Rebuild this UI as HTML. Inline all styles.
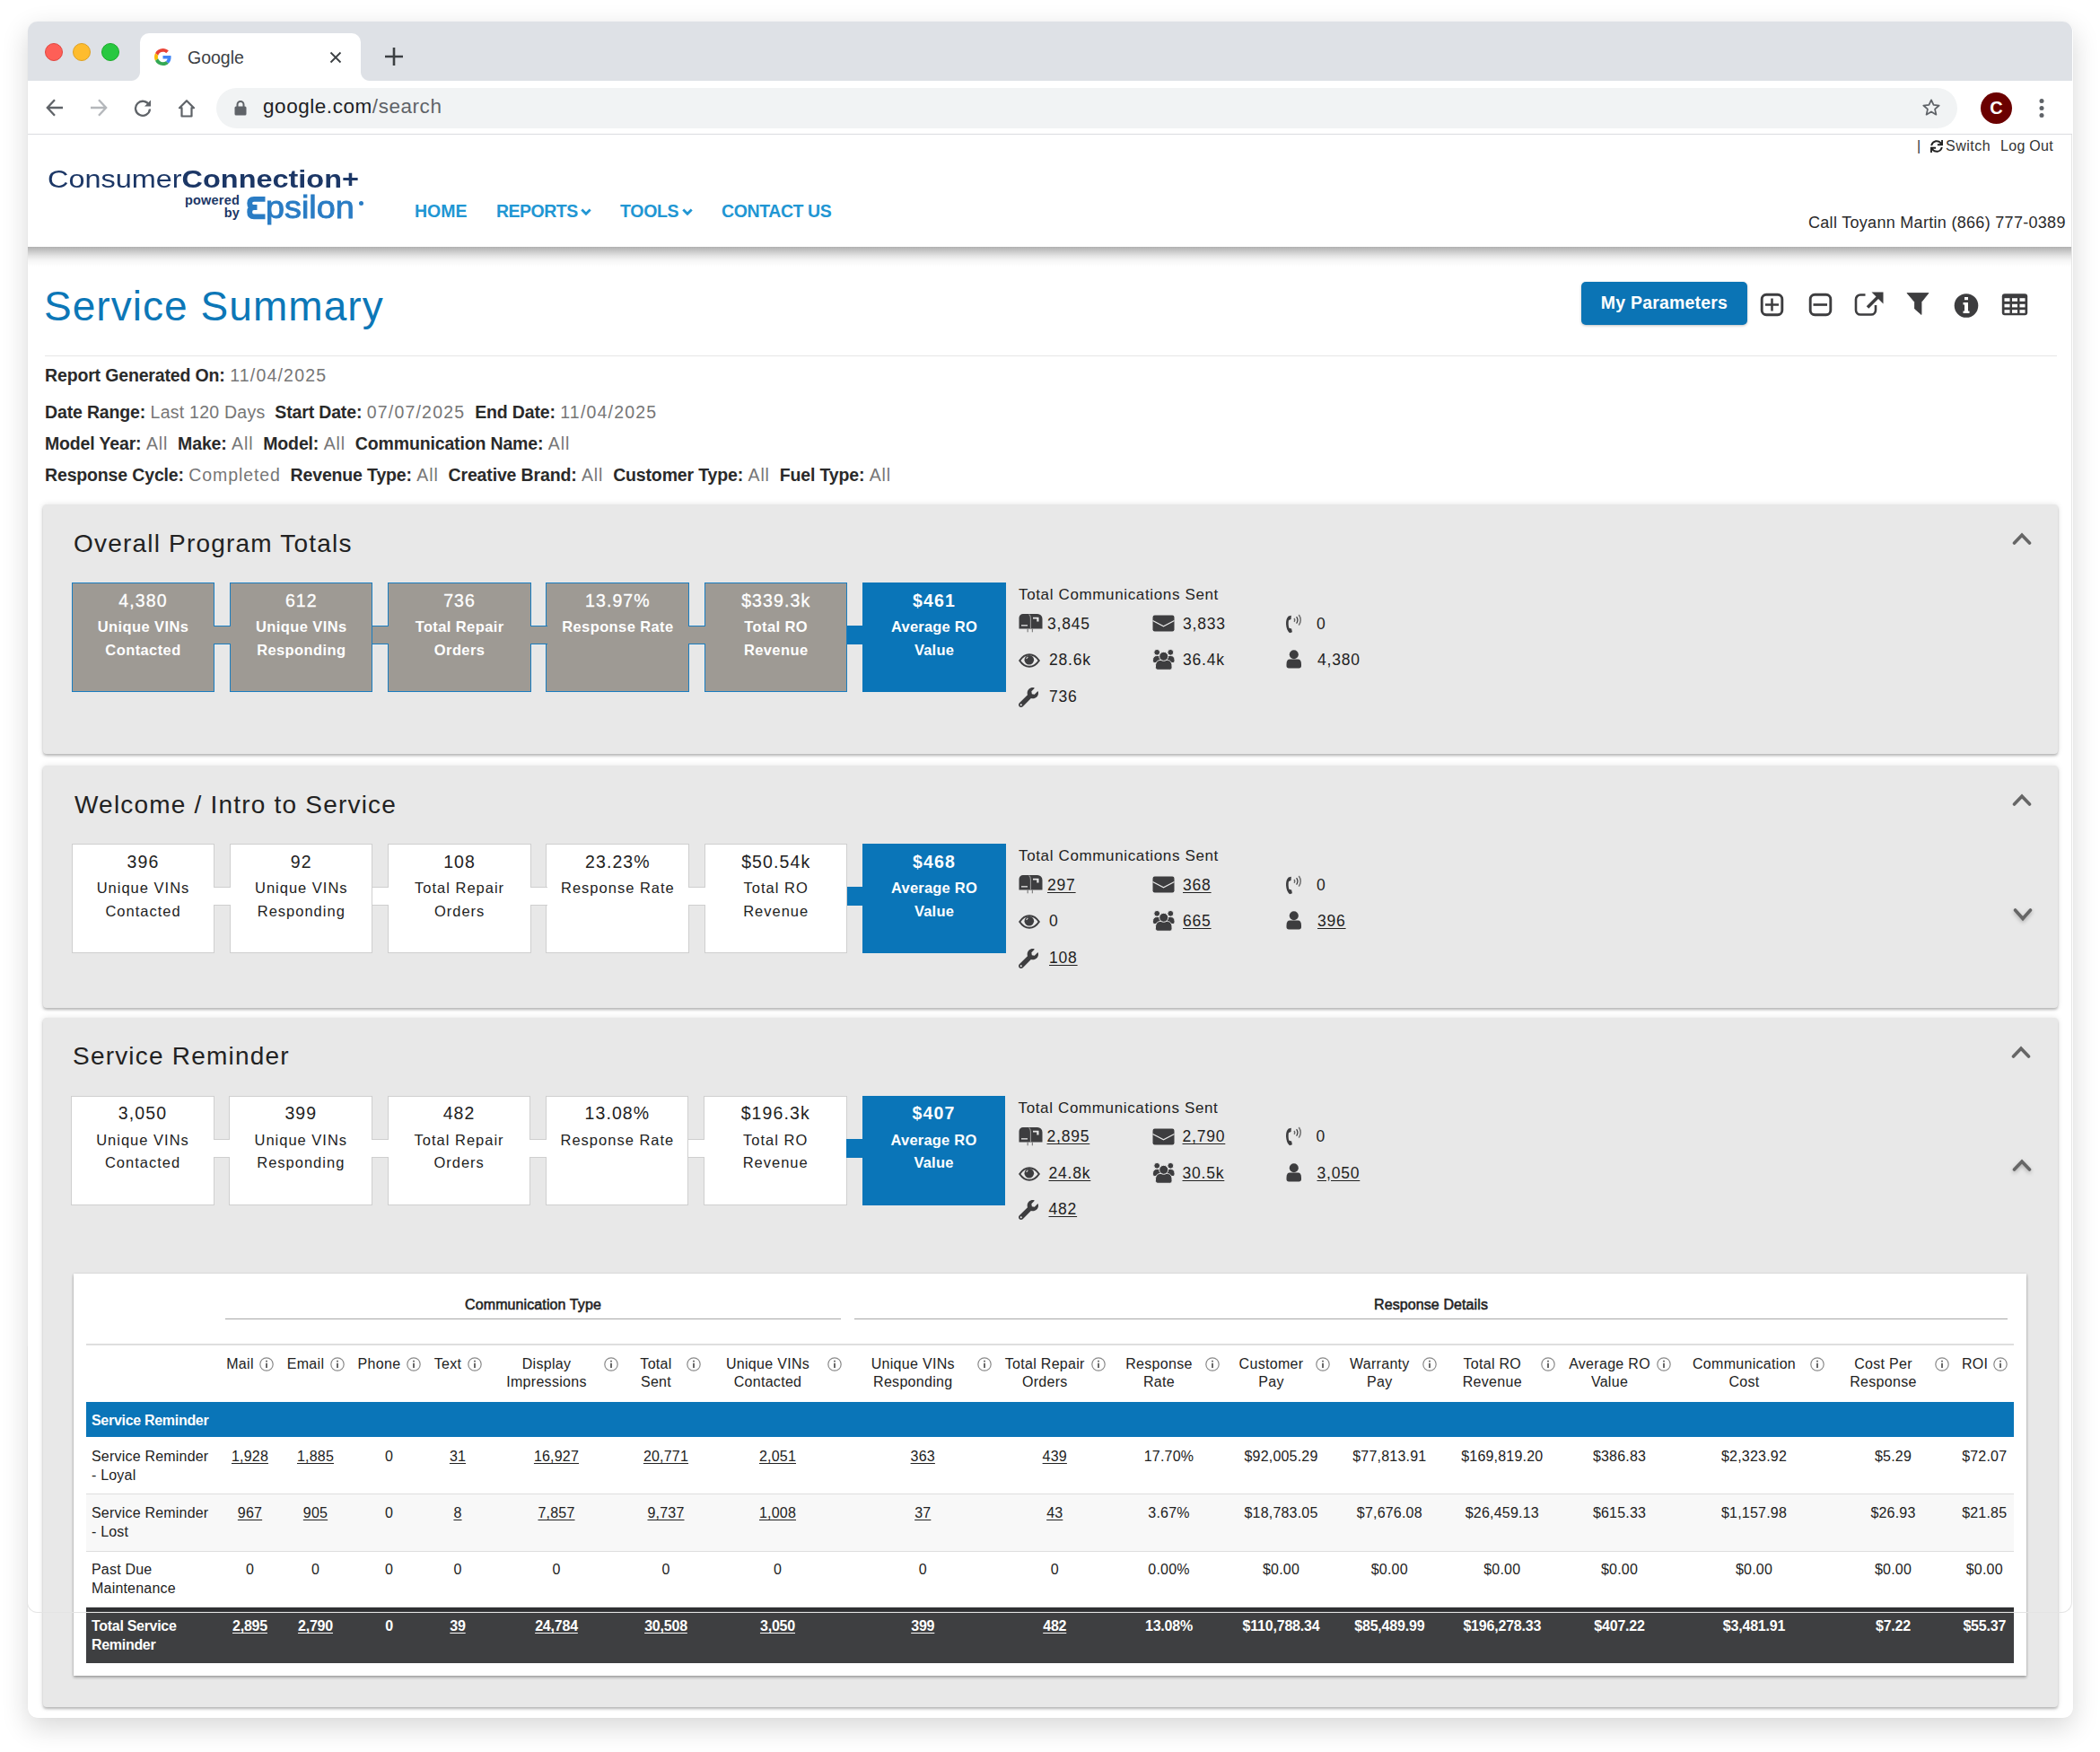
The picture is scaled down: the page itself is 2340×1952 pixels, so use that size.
<!DOCTYPE html>
<html><head><meta charset="utf-8">
<style>
*{box-sizing:border-box;margin:0;padding:0}
html,body{width:2340px;height:1952px;overflow:hidden;background:#fff;font-family:"Liberation Sans",sans-serif;color:#222}
.a{position:absolute}
#win{position:absolute;left:30.5px;top:24px;width:2279px;height:1890px;border-radius:11px;background:#fff;box-shadow:0 10px 30px rgba(0,0,0,.16),0 0 1px rgba(0,0,0,.08)}
#tabbar{position:absolute;left:30.5px;top:24px;width:2278px;height:66px;background:#dee1e6;border-radius:11px 11px 0 0}
.tl{position:absolute;width:20px;height:20px;border-radius:50%;top:48px}
#tab{position:absolute;left:156px;top:37px;width:246px;height:53px;background:#fff;border-radius:10px 10px 0 0}
#tab:before,#tab:after{content:"";position:absolute;bottom:0;width:10px;height:10px}
#tab:before{left:-10px;background:radial-gradient(circle at 0 0,transparent 9.5px,#fff 10.5px)}
#tab:after{right:-10px;background:radial-gradient(circle at 100% 0,transparent 9.5px,#fff 10.5px)}
#toolbar{position:absolute;left:30.5px;top:90px;width:2278px;height:60px;background:#fff;border-bottom:1px solid #dadce0}
#omni{position:absolute;left:241px;top:98px;width:1940px;height:45px;border-radius:22.5px;background:#f1f3f4}
#hdr{position:absolute;left:30.5px;top:150px;width:2278px;height:125px;background:#fff;z-index:2}
#hdrsh{position:absolute;left:30.5px;top:275px;width:2278px;height:22px;z-index:2;background:linear-gradient(to bottom,rgba(0,0,0,.31) 0,rgba(0,0,0,.21) 5px,rgba(0,0,0,.11) 10px,rgba(0,0,0,.04) 15px,rgba(0,0,0,0) 22px)}
.nav{position:absolute;top:224px;font-size:19.5px;font-weight:bold;color:#2196d3;white-space:nowrap}
.lbl{font-weight:bold;color:#2a2a2a;letter-spacing:-0.15px}
.val{color:#767676;letter-spacing:0.9px}
.dt{letter-spacing:1.2px}
.meta{position:absolute;left:50px;font-size:19.5px;white-space:nowrap}
.panel{position:absolute;left:48px;width:2245px;background:#e8e8e8;border-radius:4px;box-shadow:0 2px 3px rgba(0,0,0,.26),0 0 7px rgba(0,0,0,.1)}
.ptitle{position:absolute;font-size:28px;color:#222;white-space:nowrap;line-height:1;letter-spacing:1.2px;margin-top:1.5px}
.box{position:absolute;width:159.5px;height:122px;border:1.2px solid #ccc}
.box.grey{background:#9e9a94;border-color:#1a7dc0}
.box.white{background:#fff;border-color:#cfcfcf}
.box.blue{background:#0a75b8;border-color:#0a75b8}
.conn{position:absolute;height:21px;border-top:1.2px solid #ccc;border-bottom:1.2px solid #ccc;z-index:1}
.conn.grey{background:#9e9a94;border-color:#1a7dc0}
.conn.white{background:#fff;border-color:#cfcfcf}
.conn.blue{background:#0a75b8;border-color:#0a75b8}
.btxt{position:absolute;width:160px;height:122px;text-align:center;z-index:2;color:#222}
.btxt .bn{position:absolute;left:0;width:100%;top:8.5px;font-size:19.5px;line-height:22px;letter-spacing:1.1px}
.btxt.grey .bn{-webkit-text-stroke:0.3px #fff}
.btxt .bl{position:absolute;left:0;width:100%;top:37px;font-size:16.5px;line-height:25.8px;letter-spacing:1px}
.btxt.grey{color:#fff}.btxt.grey .bl{font-weight:bold;letter-spacing:0.4px}
.btxt.blue{color:#fff;font-weight:bold}.btxt.blue .bl{letter-spacing:0.2px}
.ctitle{position:absolute;font-size:17px;line-height:20px;white-space:nowrap;color:#222;letter-spacing:0.64px}
.cval{position:absolute;font-size:17.5px;line-height:20px;white-space:nowrap;color:#222;letter-spacing:0.8px}
.u{text-decoration:underline;text-underline-offset:2px}
.th2{font-size:16px;text-align:center;line-height:20px;color:#222;letter-spacing:0.1px;-webkit-text-stroke:0.55px #222}
.th{font-size:16px;line-height:20.5px;text-align:center;color:#222;white-space:nowrap;letter-spacing:0.3px}
.td{font-size:16px;line-height:21px;color:#222;white-space:nowrap;letter-spacing:0.2px}
.td.c{text-align:center}
</style></head>
<body>
<div id="win"></div>
<div id="tabbar"></div>
<div class="tl" style="left:50px;background:#fe5f57;border:1px solid #e14640"></div>
<div class="tl" style="left:81px;background:#febc2e;border:1px solid #dea123"></div>
<div class="tl" style="left:113px;background:#28c840;border:1px solid #1aab29"></div>
<div id="tab"></div>
<div id="toolbar"></div>
<div id="omni"></div>
<div id="hdr"></div><div id="hdrsh"></div>
<svg class="a" style="left:172px;top:54px" width="19" height="19" viewBox="0 0 48 48"><path fill="#EA4335" d="M24 9.5c3.54 0 6.71 1.22 9.21 3.6l6.85-6.85C35.9 2.38 30.47 0 24 0 14.62 0 6.51 5.38 2.56 13.22l7.98 6.19C12.43 13.72 17.74 9.5 24 9.5z"/><path fill="#4285F4" d="M46.98 24.55c0-1.57-.15-3.09-.38-4.55H24v9.02h12.94c-.58 2.96-2.26 5.48-4.78 7.18l7.73 6c4.51-4.18 7.09-10.36 7.09-17.65z"/><path fill="#FBBC05" d="M10.53 28.59c-.48-1.45-.76-2.99-.76-4.59s.27-3.14.76-4.59l-7.98-6.19C.92 16.46 0 20.12 0 24c0 3.88.92 7.54 2.56 10.78l7.97-6.19z"/><path fill="#34A853" d="M24 48c6.48 0 11.93-2.13 15.89-5.81l-7.73-6c-2.15 1.45-4.92 2.3-8.16 2.3-6.26 0-11.57-4.22-13.47-9.91l-7.98 6.19C6.51 42.62 14.62 48 24 48z"/></svg>
<div class="a" style="left:209px;top:52px;font-size:19.5px;color:#3c4043;line-height:24px">Google</div>
<svg class="a" style="left:367px;top:57px" width="14" height="14" viewBox="0 0 14 14"><path d="M1.5 1.5L12.5 12.5M12.5 1.5L1.5 12.5" stroke="#3c4043" stroke-width="1.8"/></svg>
<svg class="a" style="left:428px;top:52px" width="22" height="22" viewBox="0 0 22 22"><path d="M11 1V21M1 11H21" stroke="#3c4043" stroke-width="2.6"/></svg>
<svg class="a" style="left:50px;top:109px" width="22" height="22" viewBox="0 0 22 22"><path d="M20 11H3.5M11 2.2L2.8 11L11 19.8" stroke="#5f6368" stroke-width="2.3" fill="none"/></svg>
<svg class="a" style="left:99px;top:109px" width="22" height="22" viewBox="0 0 22 22"><path d="M2 11H18.5M11 2.2L19.2 11L11 19.8" stroke="#b4b7bb" stroke-width="2.3" fill="none"/></svg>
<svg class="a" style="left:148px;top:109px" width="22" height="22" viewBox="0 0 22 22"><path d="M18.2 8.2A8 8 0 1 0 19 12.5" stroke="#5f6368" stroke-width="2.3" fill="none"/><path d="M20 2.5V9.5H13Z" fill="#5f6368"/></svg>
<svg class="a" style="left:197px;top:110px" width="22" height="21" viewBox="0 0 22 21"><path d="M11 2.2L3 10.2H5.5V19.5H16.5V10.2H19Z" stroke="#5f6368" stroke-width="2.2" fill="none" stroke-linejoin="round"/></svg>
<svg class="a" style="left:261px;top:111px" width="14" height="18" viewBox="0 0 14 18"><path d="M3.5 8V5.5A3.5 3.5 0 0 1 10.5 5.5V8" stroke="#5f6368" stroke-width="2" fill="none"/><rect x="0.5" y="7.5" width="13" height="10" rx="1.5" fill="#5f6368"/></svg>
<div class="a" style="left:293px;top:106px;font-size:22.5px;line-height:26px;white-space:nowrap;color:#202124;letter-spacing:0.55px">google.com<span style="color:#5f6368">/search</span></div>
<svg class="a" style="left:2141px;top:109px" width="22" height="22" viewBox="0 0 24 24"><path d="M12 2.5l2.8 6.2 6.7.6-5.1 4.5 1.5 6.6L12 16.9l-5.9 3.5 1.5-6.6-5.1-4.5 6.7-.6z" stroke="#5f6368" stroke-width="1.9" fill="none" stroke-linejoin="round"/></svg>
<div class="a" style="left:2207px;top:103px;width:35px;height:35px;border-radius:50%;background:#6b0000;color:#fff;font-weight:bold;font-size:20px;line-height:35px;text-align:center">C</div>
<svg class="a" style="left:2270px;top:108px" width="10" height="26" viewBox="0 0 10 26"><circle cx="5" cy="4.4" r="2.5" fill="#5f6368"/><circle cx="5" cy="12.5" r="2.5" fill="#5f6368"/><circle cx="5" cy="20.6" r="2.5" fill="#5f6368"/></svg>
<div class="a" style="left:53px;top:183px;font-size:28.5px;line-height:32px;color:#1c3766;white-space:nowrap;z-index:3;transform:scaleX(1.138);transform-origin:0 0">Consumer<b>Connection+</b></div>
<div class="a" style="left:205px;top:216px;font-size:14.5px;line-height:14px;font-weight:bold;color:#1c3766;text-align:right;width:62px;z-index:3;letter-spacing:0.2px">powered<br>by</div>
<svg class="a" style="left:274px;top:216px;z-index:3" width="24" height="32" viewBox="0 0 24 32"><path d="M21.5 5.8H9Q4.2 5.8 4.2 10.4Q4.2 15 9 15H12.5M12.5 15H9Q4.2 15 4.2 20.2Q4.2 25.4 9 25.4H21.5" stroke="#2a7cc4" stroke-width="5.8" fill="none"/></svg><div class="a" style="left:296px;top:211px;font-size:35px;line-height:40px;color:#2a7cc4;white-space:nowrap;z-index:3;-webkit-text-stroke:0.9px #2a7cc4;transform:scaleX(1.08);transform-origin:0 0">psilon</div><div class="a" style="left:400px;top:224px;width:5px;height:5px;border-radius:50%;background:#2a7cc4;z-index:3"></div>
<div class="nav" style="left:462px;z-index:3">HOME</div>
<div class="nav" style="left:553px;z-index:3;letter-spacing:-0.5px">REPORTS</div>
<div class="nav" style="left:691px;z-index:3;letter-spacing:-0.3px">TOOLS</div>
<div class="nav" style="left:804px;z-index:3;letter-spacing:-0.4px">CONTACT US</div>
<svg class="a" style="left:647px;top:232px;z-index:3" width="12" height="9" viewBox="0 0 12 9"><path d="M1.3 1.5L6 6.2L10.7 1.5" stroke="#2196d3" stroke-width="2.8" fill="none"/></svg>
<svg class="a" style="left:760px;top:232px;z-index:3" width="12" height="9" viewBox="0 0 12 9"><path d="M1.3 1.5L6 6.2L10.7 1.5" stroke="#2196d3" stroke-width="2.8" fill="none"/></svg>
<div class="a" style="left:2136px;top:154px;font-size:16px;line-height:18px;color:#333;white-space:nowrap;z-index:3">|</div>
<svg class="a" style="left:2151px;top:156px;z-index:3" width="14" height="14" viewBox="0 0 512 512"><path fill="#222" d="M440.7 12.6l4 82.8A247.2 247.2 0 0 0 255.8 8C134.7 8 33.9 94.9 12.3 209.8A12 12 0 0 0 24.1 224h49.1a12 12 0 0 0 11.7-9.3 175.5 175.5 0 0 1 317-56.9l-101.5-4.9a12 12 0 0 0-12.6 12v47.4a12 12 0 0 0 12 12H500a12 12 0 0 0 12-12V12a12 12 0 0 0-12-12h-47.4a12 12 0 0 0-12 12.6zM255.8 432a175.6 175.6 0 0 1-146-77.8l101.8 4.9a12 12 0 0 0 12.6-12v-47.4a12 12 0 0 0-12-12H12a12 12 0 0 0-12 12V500a12 12 0 0 0 12 12h47.4a12 12 0 0 0 12-12.6l-4.1-82.6A247.2 247.2 0 0 0 256.2 504c121.1 0 221.9-86.9 243.6-201.8a12 12 0 0 0-11.8-14.2h-49.1a12 12 0 0 0-11.7 9.3A175.9 175.9 0 0 1 255.8 432z"/></svg>
<div class="a" style="left:2168px;top:154px;font-size:16px;line-height:18px;color:#333;white-space:nowrap;z-index:3;letter-spacing:0.5px">Switch</div>
<div class="a" style="left:2229px;top:154px;font-size:16px;line-height:18px;color:#333;white-space:nowrap;z-index:3;letter-spacing:0.3px">Log Out</div>
<div class="a" style="left:2015px;top:238px;font-size:18px;line-height:20px;color:#2a2a2a;white-space:nowrap;z-index:3;letter-spacing:0.3px">Call Toyann Martin (866) 777-0389</div>
<div class="a" id="t_title" style="left:49px;top:314px;font-size:46px;line-height:54px;color:#0c77b7;white-space:nowrap;letter-spacing:1.05px">Service Summary</div>
<div class="a" style="left:50px;top:396px;width:2242px;height:1px;background:#e6e6e6"></div>
<div class="meta" id="m1" style="top:406px;line-height:24px"><span class="lbl">Report Generated On:</span> <span class="val dt">11/04/2025</span></div>
<div class="meta" id="m2" style="top:447px;line-height:24px"><span class="lbl">Date Range:</span> <span class="val" style="letter-spacing:0.25px">Last 120 Days</span>&nbsp; <span class="lbl">Start Date:</span> <span class="val dt">07/07/2025</span>&nbsp; <span class="lbl">End Date:</span> <span class="val dt">11/04/2025</span></div>
<div class="meta" id="m3" style="top:482px;line-height:24px"><span class="lbl">Model Year:</span> <span class="val">All</span>&nbsp; <span class="lbl">Make:</span> <span class="val">All</span>&nbsp; <span class="lbl">Model:</span> <span class="val">All</span>&nbsp; <span class="lbl">Communication Name:</span> <span class="val">All</span></div>
<div class="meta" id="m4" style="top:517px;line-height:24px"><span class="lbl">Response Cycle:</span> <span class="val">Completed</span>&nbsp; <span class="lbl">Revenue Type:</span> <span class="val">All</span>&nbsp; <span class="lbl">Creative Brand:</span> <span class="val">All</span>&nbsp; <span class="lbl">Customer Type:</span> <span class="val">All</span>&nbsp; <span class="lbl">Fuel Type:</span> <span class="val">All</span></div>
<div class="a" style="left:1762px;top:314px;width:185px;height:48px;border-radius:5px;background:#0b74b5;box-shadow:0 1px 3px rgba(0,0,0,.25)"></div>
<div class="a" id="btn_t" style="left:1762px;top:313px;width:185px;height:48px;line-height:48px;text-align:center;color:#fff;font-weight:bold;font-size:19.5px;letter-spacing:0.2px">My Parameters</div>
<svg class="a" style="left:1961px;top:326px" width="27" height="27" viewBox="0 0 27 27"><rect x="2.2" y="2.2" width="22.6" height="22.6" rx="5" stroke="#3d3d3f" stroke-width="2.9" fill="none"/><path d="M13.5 6.5V20.5M6 13.5H21" stroke="#3d3d3f" stroke-width="2.5"/></svg>
<svg class="a" style="left:2015px;top:326px" width="27" height="27" viewBox="0 0 27 27"><rect x="2.2" y="2.2" width="22.6" height="22.6" rx="5" stroke="#3d3d3f" stroke-width="2.9" fill="none"/><path d="M5.5 13.5H21" stroke="#3d3d3f" stroke-width="2.7"/></svg>
<svg class="a" style="left:2066px;top:323px" width="34" height="30" viewBox="0 0 34 30"><path d="M12.5 5.5H7A5 5 0 0 0 2 10.5V22.5A5 5 0 0 0 7 27.5H19A5 5 0 0 0 24 22.5V17" stroke="#3d3d3f" stroke-width="2.6" fill="none"/><path d="M15 19.5L28 6.5" stroke="#3d3d3f" stroke-width="3.6"/><path d="M19.5 2.5H32.5V15.5Z" fill="#3d3d3f"/></svg>
<svg class="a" style="left:2124px;top:326px" width="26" height="25" viewBox="0 0 26 25"><path d="M1 0.5H25L17 10.5V24.5L9.5 18V10.5Z" fill="#3d3d3f" stroke="#3d3d3f" stroke-width="0.8" stroke-linejoin="round"/></svg>
<svg class="a" style="left:2177px;top:327px" width="28" height="27" viewBox="0 0 28 27"><ellipse cx="14" cy="13.5" rx="13.3" ry="13.3" fill="#3d3d3f"/><rect x="12" y="4" width="4" height="3.2" fill="#fff"/><path d="M10.5 10H16V19.5H17.5V22H10.5V19.5H12V12.5H10.5Z" fill="#fff"/></svg>
<svg class="a" style="left:2230px;top:327px" width="30" height="25" viewBox="0 0 30 25"><rect x="0.8" y="0.2" width="28.4" height="24" rx="3" fill="#3d3d3f"/><g fill="#fff"><rect x="3.5" y="5.2" width="6" height="3.6"/><rect x="12" y="5.2" width="6" height="3.6"/><rect x="20.5" y="5.2" width="6" height="3.6"/><rect x="3.5" y="11.8" width="6" height="3.6"/><rect x="12" y="11.8" width="6" height="3.6"/><rect x="20.5" y="11.8" width="6" height="3.6"/><rect x="3.5" y="18.2" width="6" height="3.6"/><rect x="12" y="18.2" width="6" height="3.6"/><rect x="20.5" y="18.2" width="6" height="3.6"/></g></svg>
<div class="panel" style="top:562px;left:48px;height:278px"></div>
<div class="ptitle" style="left:82px;top:590px">Overall Program Totals</div>
<div class="box grey" style="left:79.5px;top:649px"></div>
<div class="box grey" style="left:255.8px;top:649px"></div>
<div class="box grey" style="left:432.1px;top:649px"></div>
<div class="box grey" style="left:608.4px;top:649px"></div>
<div class="box grey" style="left:784.7px;top:649px"></div>
<div class="box blue" style="left:961.0px;top:649px"></div>
<div class="conn grey" style="left:238.3px;top:697px;width:18.7px"></div>
<div class="conn grey" style="left:414.6px;top:697px;width:18.7px"></div>
<div class="conn grey" style="left:590.9px;top:697px;width:18.7px"></div>
<div class="conn grey" style="left:767.2px;top:697px;width:18.7px"></div>
<div class="conn blue" style="left:943.5px;top:697px;width:18.7px"></div>
<div class="btxt grey" style="left:79.5px;top:649px"><div class="bn">4,380</div><div class="bl">Unique VINs<br>Contacted</div></div>
<div class="btxt grey" style="left:255.8px;top:649px"><div class="bn">612</div><div class="bl">Unique VINs<br>Responding</div></div>
<div class="btxt grey" style="left:432.1px;top:649px"><div class="bn">736</div><div class="bl">Total Repair<br>Orders</div></div>
<div class="btxt grey" style="left:608.4px;top:649px"><div class="bn">13.97%</div><div class="bl">Response Rate<br></div></div>
<div class="btxt grey" style="left:784.7px;top:649px"><div class="bn">$339.3k</div><div class="bl">Total RO<br>Revenue</div></div>
<div class="btxt blue" style="left:961.0px;top:649px"><div class="bn">$461</div><div class="bl">Average RO<br>Value</div></div>
<div class="ctitle" style="left:1135px;top:653px">Total Communications Sent</div>
<svg class="a" style="left:1135px;top:683px" width="27" height="22" viewBox="0 0 27 22"><path d="M5 1H21A5.5 5.5 0 0 1 26.5 6.5V17.5H0.5V5.5A4.5 4.5 0 0 1 5 1Z" fill="#3d3d3f"/><path d="M11.6 1.5C13.2 2.5 13.4 4 13.4 6V17.5" stroke="#9a9a9a" stroke-width="1.1" fill="none"/><path d="M16 4.8H22.5V9.5H20.3V6.6H16Z" fill="#e8e8e8"/><rect x="3" y="13.2" width="7" height="1.3" fill="#e8e8e8"/><rect x="9.6" y="17.5" width="1.1" height="3.8" fill="#777"/><rect x="14.8" y="17.5" width="1.1" height="3.8" fill="#777"/></svg>
<div class="cval" style="left:1167px;top:684.5px">3,845</div>
<svg class="a" style="left:1284px;top:685px" width="25" height="19" viewBox="0 0 25 19"><rect x="0.5" y="0.5" width="24" height="18" rx="2.2" fill="#3d3d3f"/><path d="M0.5 6.5L12.5 12.8L24.5 6.5" stroke="#e8e8e8" stroke-width="1.3" fill="none"/></svg>
<div class="cval" style="left:1318px;top:684.5px">3,833</div>
<svg class="a" style="left:1432px;top:680.5px" width="20" height="26" viewBox="0 0 19 24"><path d="M6.5 4.2L3.6 4.8C1.5 6.5 0.8 10 1 13.5C1.2 17.5 2.6 21 4.8 22.6L7.5 21.8L6.8 18.2L4.2 17.5C3.4 15.5 3.2 11.5 3.8 9.2L6.2 8.2Z" fill="#3d3d3f"/><path d="M9.5 7.2Q11 9 9.5 10.8" stroke="#666" stroke-width="1.3" fill="none"/><path d="M12 5.5Q14.5 9 12 12.5" stroke="#3d3d3f" stroke-width="1.2" fill="none"/><path d="M14.5 3.5Q18.3 9 14.5 14.5" stroke="#777" stroke-width="1.5" fill="none"/></svg>
<div class="cval" style="left:1467px;top:684.5px">0</div>
<svg class="a" style="left:1135px;top:728px" width="24" height="16" viewBox="0 0 24 16"><path d="M1.2 8C4.5 3 8.3 1.2 12 1.2S19.5 3 22.8 8C19.5 13 15.7 14.8 12 14.8S4.5 13 1.2 8Z" stroke="#3d3d3f" stroke-width="2" fill="none"/><circle cx="11.8" cy="7.2" r="5.3" fill="#3d3d3f"/><path d="M8.6 6L10.3 3.9" stroke="#e0e0e0" stroke-width="1.1"/></svg>
<div class="cval" style="left:1169px;top:725px">28.6k</div>
<svg class="a" style="left:1284px;top:723px" width="26" height="24" viewBox="0 0 26 24"><g fill="#3d3d3f" stroke="#e8e8e8" stroke-width="1"><path d="M0.5 12.5C0.5 9 2.5 7.5 5 7.5H8C10 7.5 11 9 11 11V15.5H2.5C1 15.5 0.5 14.5 0.5 12.5Z"/><path d="M25 12.5C25 9 23 7.5 20.5 7.5H17.5C15.5 7.5 14.5 9 14.5 11V15.5H23C24.5 15.5 25 14.5 25 12.5Z"/><circle cx="5.2" cy="3.8" r="3.4"/><circle cx="20.3" cy="3.8" r="3.4"/><path d="M3.5 19C3.5 14.5 6 12.5 9 12.5H16.5C19.5 12.5 22 14.5 22 19V20.5C22 22 21 23.3 19.5 23.3H6C4.5 23.3 3.5 22 3.5 20.5Z"/><circle cx="12.7" cy="8.3" r="5"/></g></svg>
<div class="cval" style="left:1318px;top:725px">36.4k</div>
<svg class="a" style="left:1433px;top:724px" width="18" height="21" viewBox="0 0 18 21"><circle cx="8.8" cy="5.3" r="5" fill="#3d3d3f"/><path d="M0.5 16C0.5 12.3 2 10.6 4.2 10.6H13.3C15.5 10.6 17 12.3 17 16V18C17 19.6 16 20.5 14.5 20.5H3C1.5 20.5 0.5 19.6 0.5 18Z" fill="#3d3d3f"/></svg>
<div class="cval" style="left:1468px;top:725px">4,380</div>
<svg class="a" style="left:1135px;top:765.5px" width="22" height="22" viewBox="0 0 512 512"><path fill="#3d3d3f" d="M507.73 109.1c-2.24-9.03-13.54-12.09-20.12-5.51l-74.36 74.36-67.88-11.31-11.31-67.88 74.36-74.36c6.62-6.62 3.43-17.9-5.66-20.16-47.38-11.74-99.55.91-136.58 37.93-39.64 39.64-50.55 97.1-34.05 147.2L18.74 402.76c-24.99 24.99-24.99 65.51 0 90.5 24.99 24.99 65.51 24.99 90.5 0l213.21-213.21c50.12 16.71 107.47 5.68 147.37-34.22 37.07-37.07 49.7-89.32 37.91-136.73zM64 472c-13.25 0-24-10.75-24-24 0-13.26 10.75-24 24-24s24 10.74 24 24c0 13.25-10.75 24-24 24z"/></svg>
<div class="cval" style="left:1169px;top:765.5px">736</div>
<svg class="a" style="left:2241.5px;top:592px;" width="22" height="15" viewBox="0 0 22 15"><path d="M2.5 13L11 4.2L19.5 13" stroke="#666" stroke-width="3.6" fill="none" stroke-linecap="round" stroke-linejoin="miter"/></svg>
<div class="panel" style="top:853px;left:48px;height:270px"></div>
<div class="ptitle" style="left:83px;top:881px">Welcome / Intro to Service</div>
<div class="box white" style="left:79.5px;top:940px"></div>
<div class="box white" style="left:255.8px;top:940px"></div>
<div class="box white" style="left:432.1px;top:940px"></div>
<div class="box white" style="left:608.4px;top:940px"></div>
<div class="box white" style="left:784.7px;top:940px"></div>
<div class="box blue" style="left:961.0px;top:940px"></div>
<div class="conn white" style="left:238.3px;top:988px;width:18.7px"></div>
<div class="conn white" style="left:414.6px;top:988px;width:18.7px"></div>
<div class="conn white" style="left:590.9px;top:988px;width:18.7px"></div>
<div class="conn white" style="left:767.2px;top:988px;width:18.7px"></div>
<div class="conn blue" style="left:943.5px;top:988px;width:18.7px"></div>
<div class="btxt white" style="left:79.5px;top:940px"><div class="bn">396</div><div class="bl">Unique VINs<br>Contacted</div></div>
<div class="btxt white" style="left:255.8px;top:940px"><div class="bn">92</div><div class="bl">Unique VINs<br>Responding</div></div>
<div class="btxt white" style="left:432.1px;top:940px"><div class="bn">108</div><div class="bl">Total Repair<br>Orders</div></div>
<div class="btxt white" style="left:608.4px;top:940px"><div class="bn">23.23%</div><div class="bl">Response Rate<br></div></div>
<div class="btxt white" style="left:784.7px;top:940px"><div class="bn">$50.54k</div><div class="bl">Total RO<br>Revenue</div></div>
<div class="btxt blue" style="left:961.0px;top:940px"><div class="bn">$468</div><div class="bl">Average RO<br>Value</div></div>
<div class="ctitle" style="left:1135px;top:944px">Total Communications Sent</div>
<svg class="a" style="left:1135px;top:974px" width="27" height="22" viewBox="0 0 27 22"><path d="M5 1H21A5.5 5.5 0 0 1 26.5 6.5V17.5H0.5V5.5A4.5 4.5 0 0 1 5 1Z" fill="#3d3d3f"/><path d="M11.6 1.5C13.2 2.5 13.4 4 13.4 6V17.5" stroke="#9a9a9a" stroke-width="1.1" fill="none"/><path d="M16 4.8H22.5V9.5H20.3V6.6H16Z" fill="#e8e8e8"/><rect x="3" y="13.2" width="7" height="1.3" fill="#e8e8e8"/><rect x="9.6" y="17.5" width="1.1" height="3.8" fill="#777"/><rect x="14.8" y="17.5" width="1.1" height="3.8" fill="#777"/></svg>
<div class="cval u" style="left:1167px;top:975.5px">297</div>
<svg class="a" style="left:1284px;top:976px" width="25" height="19" viewBox="0 0 25 19"><rect x="0.5" y="0.5" width="24" height="18" rx="2.2" fill="#3d3d3f"/><path d="M0.5 6.5L12.5 12.8L24.5 6.5" stroke="#e8e8e8" stroke-width="1.3" fill="none"/></svg>
<div class="cval u" style="left:1318px;top:975.5px">368</div>
<svg class="a" style="left:1432px;top:971.5px" width="20" height="26" viewBox="0 0 19 24"><path d="M6.5 4.2L3.6 4.8C1.5 6.5 0.8 10 1 13.5C1.2 17.5 2.6 21 4.8 22.6L7.5 21.8L6.8 18.2L4.2 17.5C3.4 15.5 3.2 11.5 3.8 9.2L6.2 8.2Z" fill="#3d3d3f"/><path d="M9.5 7.2Q11 9 9.5 10.8" stroke="#666" stroke-width="1.3" fill="none"/><path d="M12 5.5Q14.5 9 12 12.5" stroke="#3d3d3f" stroke-width="1.2" fill="none"/><path d="M14.5 3.5Q18.3 9 14.5 14.5" stroke="#777" stroke-width="1.5" fill="none"/></svg>
<div class="cval" style="left:1467px;top:975.5px">0</div>
<svg class="a" style="left:1135px;top:1019px" width="24" height="16" viewBox="0 0 24 16"><path d="M1.2 8C4.5 3 8.3 1.2 12 1.2S19.5 3 22.8 8C19.5 13 15.7 14.8 12 14.8S4.5 13 1.2 8Z" stroke="#3d3d3f" stroke-width="2" fill="none"/><circle cx="11.8" cy="7.2" r="5.3" fill="#3d3d3f"/><path d="M8.6 6L10.3 3.9" stroke="#e0e0e0" stroke-width="1.1"/></svg>
<div class="cval" style="left:1169px;top:1016px">0</div>
<svg class="a" style="left:1284px;top:1014px" width="26" height="24" viewBox="0 0 26 24"><g fill="#3d3d3f" stroke="#e8e8e8" stroke-width="1"><path d="M0.5 12.5C0.5 9 2.5 7.5 5 7.5H8C10 7.5 11 9 11 11V15.5H2.5C1 15.5 0.5 14.5 0.5 12.5Z"/><path d="M25 12.5C25 9 23 7.5 20.5 7.5H17.5C15.5 7.5 14.5 9 14.5 11V15.5H23C24.5 15.5 25 14.5 25 12.5Z"/><circle cx="5.2" cy="3.8" r="3.4"/><circle cx="20.3" cy="3.8" r="3.4"/><path d="M3.5 19C3.5 14.5 6 12.5 9 12.5H16.5C19.5 12.5 22 14.5 22 19V20.5C22 22 21 23.3 19.5 23.3H6C4.5 23.3 3.5 22 3.5 20.5Z"/><circle cx="12.7" cy="8.3" r="5"/></g></svg>
<div class="cval u" style="left:1318px;top:1016px">665</div>
<svg class="a" style="left:1433px;top:1015px" width="18" height="21" viewBox="0 0 18 21"><circle cx="8.8" cy="5.3" r="5" fill="#3d3d3f"/><path d="M0.5 16C0.5 12.3 2 10.6 4.2 10.6H13.3C15.5 10.6 17 12.3 17 16V18C17 19.6 16 20.5 14.5 20.5H3C1.5 20.5 0.5 19.6 0.5 18Z" fill="#3d3d3f"/></svg>
<div class="cval u" style="left:1468px;top:1016px">396</div>
<svg class="a" style="left:1135px;top:1056.5px" width="22" height="22" viewBox="0 0 512 512"><path fill="#3d3d3f" d="M507.73 109.1c-2.24-9.03-13.54-12.09-20.12-5.51l-74.36 74.36-67.88-11.31-11.31-67.88 74.36-74.36c6.62-6.62 3.43-17.9-5.66-20.16-47.38-11.74-99.55.91-136.58 37.93-39.64 39.64-50.55 97.1-34.05 147.2L18.74 402.76c-24.99 24.99-24.99 65.51 0 90.5 24.99 24.99 65.51 24.99 90.5 0l213.21-213.21c50.12 16.71 107.47 5.68 147.37-34.22 37.07-37.07 49.7-89.32 37.91-136.73zM64 472c-13.25 0-24-10.75-24-24 0-13.26 10.75-24 24-24s24 10.74 24 24c0 13.25-10.75 24-24 24z"/></svg>
<div class="cval u" style="left:1169px;top:1056.5px">108</div>
<svg class="a" style="left:2241.5px;top:883px;" width="22" height="15" viewBox="0 0 22 15"><path d="M2.5 13L11 4.2L19.5 13" stroke="#666" stroke-width="3.6" fill="none" stroke-linecap="round" stroke-linejoin="miter"/></svg>
<svg class="a" style="left:2242.5px;top:1012px;filter:drop-shadow(0 2px 2px rgba(0,0,0,.25));" width="22" height="15" viewBox="0 0 22 15"><path d="M2.5 2L11 11.5L19.5 2" stroke="#666" stroke-width="3.6" fill="none" stroke-linecap="round" stroke-linejoin="miter"/></svg>
<div class="panel" style="top:1133.5px;left:47.5px;height:768.5px"></div>
<div class="ptitle" style="left:81px;top:1161.5px">Service Reminder</div>
<div class="box white" style="left:79.0px;top:1220.5px"></div>
<div class="box white" style="left:255.3px;top:1220.5px"></div>
<div class="box white" style="left:431.6px;top:1220.5px"></div>
<div class="box white" style="left:607.9px;top:1220.5px"></div>
<div class="box white" style="left:784.2px;top:1220.5px"></div>
<div class="box blue" style="left:960.5px;top:1220.5px"></div>
<div class="conn white" style="left:237.8px;top:1268.5px;width:18.7px"></div>
<div class="conn white" style="left:414.1px;top:1268.5px;width:18.7px"></div>
<div class="conn white" style="left:590.4px;top:1268.5px;width:18.7px"></div>
<div class="conn white" style="left:766.7px;top:1268.5px;width:18.7px"></div>
<div class="conn blue" style="left:943.0px;top:1268.5px;width:18.7px"></div>
<div class="btxt white" style="left:79.0px;top:1220.5px"><div class="bn">3,050</div><div class="bl">Unique VINs<br>Contacted</div></div>
<div class="btxt white" style="left:255.3px;top:1220.5px"><div class="bn">399</div><div class="bl">Unique VINs<br>Responding</div></div>
<div class="btxt white" style="left:431.6px;top:1220.5px"><div class="bn">482</div><div class="bl">Total Repair<br>Orders</div></div>
<div class="btxt white" style="left:607.9px;top:1220.5px"><div class="bn">13.08%</div><div class="bl">Response Rate<br></div></div>
<div class="btxt white" style="left:784.2px;top:1220.5px"><div class="bn">$196.3k</div><div class="bl">Total RO<br>Revenue</div></div>
<div class="btxt blue" style="left:960.5px;top:1220.5px"><div class="bn">$407</div><div class="bl">Average RO<br>Value</div></div>
<div class="ctitle" style="left:1134.5px;top:1224.5px">Total Communications Sent</div>
<svg class="a" style="left:1134.5px;top:1254.5px" width="27" height="22" viewBox="0 0 27 22"><path d="M5 1H21A5.5 5.5 0 0 1 26.5 6.5V17.5H0.5V5.5A4.5 4.5 0 0 1 5 1Z" fill="#3d3d3f"/><path d="M11.6 1.5C13.2 2.5 13.4 4 13.4 6V17.5" stroke="#9a9a9a" stroke-width="1.1" fill="none"/><path d="M16 4.8H22.5V9.5H20.3V6.6H16Z" fill="#e8e8e8"/><rect x="3" y="13.2" width="7" height="1.3" fill="#e8e8e8"/><rect x="9.6" y="17.5" width="1.1" height="3.8" fill="#777"/><rect x="14.8" y="17.5" width="1.1" height="3.8" fill="#777"/></svg>
<div class="cval u" style="left:1166.5px;top:1256.0px">2,895</div>
<svg class="a" style="left:1283.5px;top:1256.5px" width="25" height="19" viewBox="0 0 25 19"><rect x="0.5" y="0.5" width="24" height="18" rx="2.2" fill="#3d3d3f"/><path d="M0.5 6.5L12.5 12.8L24.5 6.5" stroke="#e8e8e8" stroke-width="1.3" fill="none"/></svg>
<div class="cval u" style="left:1317.5px;top:1256.0px">2,790</div>
<svg class="a" style="left:1431.5px;top:1252.0px" width="20" height="26" viewBox="0 0 19 24"><path d="M6.5 4.2L3.6 4.8C1.5 6.5 0.8 10 1 13.5C1.2 17.5 2.6 21 4.8 22.6L7.5 21.8L6.8 18.2L4.2 17.5C3.4 15.5 3.2 11.5 3.8 9.2L6.2 8.2Z" fill="#3d3d3f"/><path d="M9.5 7.2Q11 9 9.5 10.8" stroke="#666" stroke-width="1.3" fill="none"/><path d="M12 5.5Q14.5 9 12 12.5" stroke="#3d3d3f" stroke-width="1.2" fill="none"/><path d="M14.5 3.5Q18.3 9 14.5 14.5" stroke="#777" stroke-width="1.5" fill="none"/></svg>
<div class="cval" style="left:1466.5px;top:1256.0px">0</div>
<svg class="a" style="left:1134.5px;top:1299.5px" width="24" height="16" viewBox="0 0 24 16"><path d="M1.2 8C4.5 3 8.3 1.2 12 1.2S19.5 3 22.8 8C19.5 13 15.7 14.8 12 14.8S4.5 13 1.2 8Z" stroke="#3d3d3f" stroke-width="2" fill="none"/><circle cx="11.8" cy="7.2" r="5.3" fill="#3d3d3f"/><path d="M8.6 6L10.3 3.9" stroke="#e0e0e0" stroke-width="1.1"/></svg>
<div class="cval u" style="left:1168.5px;top:1296.5px">24.8k</div>
<svg class="a" style="left:1283.5px;top:1294.5px" width="26" height="24" viewBox="0 0 26 24"><g fill="#3d3d3f" stroke="#e8e8e8" stroke-width="1"><path d="M0.5 12.5C0.5 9 2.5 7.5 5 7.5H8C10 7.5 11 9 11 11V15.5H2.5C1 15.5 0.5 14.5 0.5 12.5Z"/><path d="M25 12.5C25 9 23 7.5 20.5 7.5H17.5C15.5 7.5 14.5 9 14.5 11V15.5H23C24.5 15.5 25 14.5 25 12.5Z"/><circle cx="5.2" cy="3.8" r="3.4"/><circle cx="20.3" cy="3.8" r="3.4"/><path d="M3.5 19C3.5 14.5 6 12.5 9 12.5H16.5C19.5 12.5 22 14.5 22 19V20.5C22 22 21 23.3 19.5 23.3H6C4.5 23.3 3.5 22 3.5 20.5Z"/><circle cx="12.7" cy="8.3" r="5"/></g></svg>
<div class="cval u" style="left:1317.5px;top:1296.5px">30.5k</div>
<svg class="a" style="left:1432.5px;top:1295.5px" width="18" height="21" viewBox="0 0 18 21"><circle cx="8.8" cy="5.3" r="5" fill="#3d3d3f"/><path d="M0.5 16C0.5 12.3 2 10.6 4.2 10.6H13.3C15.5 10.6 17 12.3 17 16V18C17 19.6 16 20.5 14.5 20.5H3C1.5 20.5 0.5 19.6 0.5 18Z" fill="#3d3d3f"/></svg>
<div class="cval u" style="left:1467.5px;top:1296.5px">3,050</div>
<svg class="a" style="left:1134.5px;top:1337.0px" width="22" height="22" viewBox="0 0 512 512"><path fill="#3d3d3f" d="M507.73 109.1c-2.24-9.03-13.54-12.09-20.12-5.51l-74.36 74.36-67.88-11.31-11.31-67.88 74.36-74.36c6.62-6.62 3.43-17.9-5.66-20.16-47.38-11.74-99.55.91-136.58 37.93-39.64 39.64-50.55 97.1-34.05 147.2L18.74 402.76c-24.99 24.99-24.99 65.51 0 90.5 24.99 24.99 65.51 24.99 90.5 0l213.21-213.21c50.12 16.71 107.47 5.68 147.37-34.22 37.07-37.07 49.7-89.32 37.91-136.73zM64 472c-13.25 0-24-10.75-24-24 0-13.26 10.75-24 24-24s24 10.74 24 24c0 13.25-10.75 24-24 24z"/></svg>
<div class="cval u" style="left:1168.5px;top:1337.0px">482</div>
<svg class="a" style="left:2241.0px;top:1163.5px;" width="22" height="15" viewBox="0 0 22 15"><path d="M2.5 13L11 4.2L19.5 13" stroke="#666" stroke-width="3.6" fill="none" stroke-linecap="round" stroke-linejoin="miter"/></svg>
<svg class="a" style="left:2242.0px;top:1290.0px;filter:drop-shadow(0 2px 2px rgba(0,0,0,.25));" width="22" height="15" viewBox="0 0 22 15"><path d="M2.5 13L11 4.2L19.5 13" stroke="#666" stroke-width="3.6" fill="none" stroke-linecap="round" stroke-linejoin="miter"/></svg>
<div class="a" style="left:82px;top:1419px;width:2176px;height:448px;background:#fff;box-shadow:0 2px 3px rgba(0,0,0,.3),0 0 2px rgba(0,0,0,.12)"></div>
<div class="a th2" style="left:251px;top:1444px;width:686px">Communication Type</div>
<div class="a" style="left:251px;top:1469px;width:686px;height:1px;background:#a8a8a8"></div>
<div class="a th2" style="left:952px;top:1444px;width:1285px">Response Details</div>
<div class="a" style="left:952px;top:1469px;width:1285px;height:1px;background:#a8a8a8"></div>
<div class="a" style="left:96px;top:1496.5px;width:2147.5px;height:2px;background:#dedede"></div>
<div class="a th" style="left:252px;top:1509.5px;width:31px">Mail</div>
<svg class="a" style="left:289px;top:1512.3px" width="16" height="16" viewBox="0 0 16 16"><circle cx="8" cy="8" r="7.2" stroke="#8a8a8a" stroke-width="1.2" fill="none"/><rect x="7.2" y="3.8" width="1.6" height="1.6" fill="#444"/><rect x="7.2" y="6.8" width="1.6" height="5.2" fill="#444"/></svg>
<div class="a th" style="left:319px;top:1509.5px;width:43px">Email</div>
<svg class="a" style="left:368px;top:1512.3px" width="16" height="16" viewBox="0 0 16 16"><circle cx="8" cy="8" r="7.2" stroke="#8a8a8a" stroke-width="1.2" fill="none"/><rect x="7.2" y="3.8" width="1.6" height="1.6" fill="#444"/><rect x="7.2" y="6.8" width="1.6" height="5.2" fill="#444"/></svg>
<div class="a th" style="left:398px;top:1509.5px;width:49px">Phone</div>
<svg class="a" style="left:453px;top:1512.3px" width="16" height="16" viewBox="0 0 16 16"><circle cx="8" cy="8" r="7.2" stroke="#8a8a8a" stroke-width="1.2" fill="none"/><rect x="7.2" y="3.8" width="1.6" height="1.6" fill="#444"/><rect x="7.2" y="6.8" width="1.6" height="5.2" fill="#444"/></svg>
<div class="a th" style="left:483px;top:1509.5px;width:32px">Text</div>
<svg class="a" style="left:521px;top:1512.3px" width="16" height="16" viewBox="0 0 16 16"><circle cx="8" cy="8" r="7.2" stroke="#8a8a8a" stroke-width="1.2" fill="none"/><rect x="7.2" y="3.8" width="1.6" height="1.6" fill="#444"/><rect x="7.2" y="6.8" width="1.6" height="5.2" fill="#444"/></svg>
<div class="a th" style="left:551px;top:1509.5px;width:116px">Display<br>Impressions</div>
<svg class="a" style="left:673px;top:1512.3px" width="16" height="16" viewBox="0 0 16 16"><circle cx="8" cy="8" r="7.2" stroke="#8a8a8a" stroke-width="1.2" fill="none"/><rect x="7.2" y="3.8" width="1.6" height="1.6" fill="#444"/><rect x="7.2" y="6.8" width="1.6" height="5.2" fill="#444"/></svg>
<div class="a th" style="left:703px;top:1509.5px;width:56px">Total<br>Sent</div>
<svg class="a" style="left:765px;top:1512.3px" width="16" height="16" viewBox="0 0 16 16"><circle cx="8" cy="8" r="7.2" stroke="#8a8a8a" stroke-width="1.2" fill="none"/><rect x="7.2" y="3.8" width="1.6" height="1.6" fill="#444"/><rect x="7.2" y="6.8" width="1.6" height="5.2" fill="#444"/></svg>
<div class="a th" style="left:795px;top:1509.5px;width:121px">Unique VINs<br>Contacted</div>
<svg class="a" style="left:922px;top:1512.3px" width="16" height="16" viewBox="0 0 16 16"><circle cx="8" cy="8" r="7.2" stroke="#8a8a8a" stroke-width="1.2" fill="none"/><rect x="7.2" y="3.8" width="1.6" height="1.6" fill="#444"/><rect x="7.2" y="6.8" width="1.6" height="5.2" fill="#444"/></svg>
<div class="a th" style="left:952px;top:1509.5px;width:130.5px">Unique VINs<br>Responding</div>
<svg class="a" style="left:1088.5px;top:1512.3px" width="16" height="16" viewBox="0 0 16 16"><circle cx="8" cy="8" r="7.2" stroke="#8a8a8a" stroke-width="1.2" fill="none"/><rect x="7.2" y="3.8" width="1.6" height="1.6" fill="#444"/><rect x="7.2" y="6.8" width="1.6" height="5.2" fill="#444"/></svg>
<div class="a th" style="left:1118.5px;top:1509.5px;width:91.5px">Total Repair<br>Orders</div>
<svg class="a" style="left:1216px;top:1512.3px" width="16" height="16" viewBox="0 0 16 16"><circle cx="8" cy="8" r="7.2" stroke="#8a8a8a" stroke-width="1.2" fill="none"/><rect x="7.2" y="3.8" width="1.6" height="1.6" fill="#444"/><rect x="7.2" y="6.8" width="1.6" height="5.2" fill="#444"/></svg>
<div class="a th" style="left:1246px;top:1509.5px;width:91px">Response<br>Rate</div>
<svg class="a" style="left:1343px;top:1512.3px" width="16" height="16" viewBox="0 0 16 16"><circle cx="8" cy="8" r="7.2" stroke="#8a8a8a" stroke-width="1.2" fill="none"/><rect x="7.2" y="3.8" width="1.6" height="1.6" fill="#444"/><rect x="7.2" y="6.8" width="1.6" height="5.2" fill="#444"/></svg>
<div class="a th" style="left:1373px;top:1509.5px;width:87px">Customer<br>Pay</div>
<svg class="a" style="left:1466px;top:1512.3px" width="16" height="16" viewBox="0 0 16 16"><circle cx="8" cy="8" r="7.2" stroke="#8a8a8a" stroke-width="1.2" fill="none"/><rect x="7.2" y="3.8" width="1.6" height="1.6" fill="#444"/><rect x="7.2" y="6.8" width="1.6" height="5.2" fill="#444"/></svg>
<div class="a th" style="left:1496px;top:1509.5px;width:82.59999999999991px">Warranty<br>Pay</div>
<svg class="a" style="left:1584.6px;top:1512.3px" width="16" height="16" viewBox="0 0 16 16"><circle cx="8" cy="8" r="7.2" stroke="#8a8a8a" stroke-width="1.2" fill="none"/><rect x="7.2" y="3.8" width="1.6" height="1.6" fill="#444"/><rect x="7.2" y="6.8" width="1.6" height="5.2" fill="#444"/></svg>
<div class="a th" style="left:1614.6px;top:1509.5px;width:96.40000000000009px">Total RO<br>Revenue</div>
<svg class="a" style="left:1717px;top:1512.3px" width="16" height="16" viewBox="0 0 16 16"><circle cx="8" cy="8" r="7.2" stroke="#8a8a8a" stroke-width="1.2" fill="none"/><rect x="7.2" y="3.8" width="1.6" height="1.6" fill="#444"/><rect x="7.2" y="6.8" width="1.6" height="5.2" fill="#444"/></svg>
<div class="a th" style="left:1747px;top:1509.5px;width:93px">Average RO<br>Value</div>
<svg class="a" style="left:1846px;top:1512.3px" width="16" height="16" viewBox="0 0 16 16"><circle cx="8" cy="8" r="7.2" stroke="#8a8a8a" stroke-width="1.2" fill="none"/><rect x="7.2" y="3.8" width="1.6" height="1.6" fill="#444"/><rect x="7.2" y="6.8" width="1.6" height="5.2" fill="#444"/></svg>
<div class="a th" style="left:1876px;top:1509.5px;width:135px">Communication<br>Cost</div>
<svg class="a" style="left:2017px;top:1512.3px" width="16" height="16" viewBox="0 0 16 16"><circle cx="8" cy="8" r="7.2" stroke="#8a8a8a" stroke-width="1.2" fill="none"/><rect x="7.2" y="3.8" width="1.6" height="1.6" fill="#444"/><rect x="7.2" y="6.8" width="1.6" height="5.2" fill="#444"/></svg>
<div class="a th" style="left:2047px;top:1509.5px;width:103px">Cost Per<br>Response</div>
<svg class="a" style="left:2156px;top:1512.3px" width="16" height="16" viewBox="0 0 16 16"><circle cx="8" cy="8" r="7.2" stroke="#8a8a8a" stroke-width="1.2" fill="none"/><rect x="7.2" y="3.8" width="1.6" height="1.6" fill="#444"/><rect x="7.2" y="6.8" width="1.6" height="5.2" fill="#444"/></svg>
<div class="a th" style="left:2186px;top:1509.5px;width:28.5px">ROI</div>
<svg class="a" style="left:2220.5px;top:1512.3px" width="16" height="16" viewBox="0 0 16 16"><circle cx="8" cy="8" r="7.2" stroke="#8a8a8a" stroke-width="1.2" fill="none"/><rect x="7.2" y="3.8" width="1.6" height="1.6" fill="#444"/><rect x="7.2" y="6.8" width="1.6" height="5.2" fill="#444"/></svg>
<div class="a" style="left:96px;top:1561.5px;width:2147.5px;height:39.5px;background:#0a75b8"></div>
<div class="a td" style="left:102px;top:1572px;color:#fff;font-weight:bold;letter-spacing:-0.3px">Service Reminder</div>
<div class="a" style="left:96px;top:1601px;width:2147.5px;height:63.5px;background:#fff;border-bottom:1px solid #dedede"></div>
<div class="a td" style="left:102px;top:1612px">Service Reminder<br>- Loyal</div>
<div class="a td c" style="left:245px;top:1612px;width:67px"><span class="u">1,928</span></div>
<div class="a td c" style="left:312px;top:1612px;width:79px"><span class="u">1,885</span></div>
<div class="a td c" style="left:391px;top:1612px;width:85px"><span class="">0</span></div>
<div class="a td c" style="left:476px;top:1612px;width:68px"><span class="u">31</span></div>
<div class="a td c" style="left:544px;top:1612px;width:152px"><span class="u">16,927</span></div>
<div class="a td c" style="left:696px;top:1612px;width:92px"><span class="u">20,771</span></div>
<div class="a td c" style="left:788px;top:1612px;width:157px"><span class="u">2,051</span></div>
<div class="a td c" style="left:945px;top:1612px;width:166.5px"><span class="u">363</span></div>
<div class="a td c" style="left:1111.5px;top:1612px;width:127.5px"><span class="u">439</span></div>
<div class="a td c" style="left:1239px;top:1612px;width:127px"><span class="">17.70%</span></div>
<div class="a td c" style="left:1366px;top:1612px;width:123px"><span class="">$92,005.29</span></div>
<div class="a td c" style="left:1489px;top:1612px;width:118.59999999999991px"><span class="">$77,813.91</span></div>
<div class="a td c" style="left:1607.6px;top:1612px;width:132.4000000000001px"><span class="">$169,819.20</span></div>
<div class="a td c" style="left:1740px;top:1612px;width:129px"><span class="">$386.83</span></div>
<div class="a td c" style="left:1869px;top:1612px;width:171px"><span class="">$2,323.92</span></div>
<div class="a td c" style="left:2040px;top:1612px;width:139px"><span class="">$5.29</span></div>
<div class="a td c" style="left:2179px;top:1612px;width:64.5px"><span class="">$72.07</span></div>
<div class="a" style="left:96px;top:1664.5px;width:2147.5px;height:64px;background:#f8f8f8;border-bottom:1px solid #dedede"></div>
<div class="a td" style="left:102px;top:1675px">Service Reminder<br>- Lost</div>
<div class="a td c" style="left:245px;top:1675px;width:67px"><span class="u">967</span></div>
<div class="a td c" style="left:312px;top:1675px;width:79px"><span class="u">905</span></div>
<div class="a td c" style="left:391px;top:1675px;width:85px"><span class="">0</span></div>
<div class="a td c" style="left:476px;top:1675px;width:68px"><span class="u">8</span></div>
<div class="a td c" style="left:544px;top:1675px;width:152px"><span class="u">7,857</span></div>
<div class="a td c" style="left:696px;top:1675px;width:92px"><span class="u">9,737</span></div>
<div class="a td c" style="left:788px;top:1675px;width:157px"><span class="u">1,008</span></div>
<div class="a td c" style="left:945px;top:1675px;width:166.5px"><span class="u">37</span></div>
<div class="a td c" style="left:1111.5px;top:1675px;width:127.5px"><span class="u">43</span></div>
<div class="a td c" style="left:1239px;top:1675px;width:127px"><span class="">3.67%</span></div>
<div class="a td c" style="left:1366px;top:1675px;width:123px"><span class="">$18,783.05</span></div>
<div class="a td c" style="left:1489px;top:1675px;width:118.59999999999991px"><span class="">$7,676.08</span></div>
<div class="a td c" style="left:1607.6px;top:1675px;width:132.4000000000001px"><span class="">$26,459.13</span></div>
<div class="a td c" style="left:1740px;top:1675px;width:129px"><span class="">$615.33</span></div>
<div class="a td c" style="left:1869px;top:1675px;width:171px"><span class="">$1,157.98</span></div>
<div class="a td c" style="left:2040px;top:1675px;width:139px"><span class="">$26.93</span></div>
<div class="a td c" style="left:2179px;top:1675px;width:64.5px"><span class="">$21.85</span></div>
<div class="a" style="left:96px;top:1728.5px;width:2147.5px;height:62.5px;background:#fff;border-bottom:1px solid #dedede"></div>
<div class="a td" style="left:102px;top:1738px">Past Due<br>Maintenance</div>
<div class="a td c" style="left:245px;top:1738px;width:67px"><span class="">0</span></div>
<div class="a td c" style="left:312px;top:1738px;width:79px"><span class="">0</span></div>
<div class="a td c" style="left:391px;top:1738px;width:85px"><span class="">0</span></div>
<div class="a td c" style="left:476px;top:1738px;width:68px"><span class="">0</span></div>
<div class="a td c" style="left:544px;top:1738px;width:152px"><span class="">0</span></div>
<div class="a td c" style="left:696px;top:1738px;width:92px"><span class="">0</span></div>
<div class="a td c" style="left:788px;top:1738px;width:157px"><span class="">0</span></div>
<div class="a td c" style="left:945px;top:1738px;width:166.5px"><span class="">0</span></div>
<div class="a td c" style="left:1111.5px;top:1738px;width:127.5px"><span class="">0</span></div>
<div class="a td c" style="left:1239px;top:1738px;width:127px"><span class="">0.00%</span></div>
<div class="a td c" style="left:1366px;top:1738px;width:123px"><span class="">$0.00</span></div>
<div class="a td c" style="left:1489px;top:1738px;width:118.59999999999991px"><span class="">$0.00</span></div>
<div class="a td c" style="left:1607.6px;top:1738px;width:132.4000000000001px"><span class="">$0.00</span></div>
<div class="a td c" style="left:1740px;top:1738px;width:129px"><span class="">$0.00</span></div>
<div class="a td c" style="left:1869px;top:1738px;width:171px"><span class="">$0.00</span></div>
<div class="a td c" style="left:2040px;top:1738px;width:139px"><span class="">$0.00</span></div>
<div class="a td c" style="left:2179px;top:1738px;width:64.5px"><span class="">$0.00</span></div>
<div class="a" style="left:96px;top:1791px;width:2147.5px;height:61.5px;background:#3e3f41;border-top:4px solid #2f3032"></div>
<div class="a td" style="left:102px;top:1801px;color:#fff;font-weight:bold;letter-spacing:-0.3px">Total Service<br>Reminder</div>
<div class="a td c" style="left:245px;top:1801px;width:67px;color:#fff;font-weight:bold;letter-spacing:-0.2px"><span class="u">2,895</span></div>
<div class="a td c" style="left:312px;top:1801px;width:79px;color:#fff;font-weight:bold;letter-spacing:-0.2px"><span class="u">2,790</span></div>
<div class="a td c" style="left:391px;top:1801px;width:85px;color:#fff;font-weight:bold;letter-spacing:-0.2px"><span class="">0</span></div>
<div class="a td c" style="left:476px;top:1801px;width:68px;color:#fff;font-weight:bold;letter-spacing:-0.2px"><span class="u">39</span></div>
<div class="a td c" style="left:544px;top:1801px;width:152px;color:#fff;font-weight:bold;letter-spacing:-0.2px"><span class="u">24,784</span></div>
<div class="a td c" style="left:696px;top:1801px;width:92px;color:#fff;font-weight:bold;letter-spacing:-0.2px"><span class="u">30,508</span></div>
<div class="a td c" style="left:788px;top:1801px;width:157px;color:#fff;font-weight:bold;letter-spacing:-0.2px"><span class="u">3,050</span></div>
<div class="a td c" style="left:945px;top:1801px;width:166.5px;color:#fff;font-weight:bold;letter-spacing:-0.2px"><span class="u">399</span></div>
<div class="a td c" style="left:1111.5px;top:1801px;width:127.5px;color:#fff;font-weight:bold;letter-spacing:-0.2px"><span class="u">482</span></div>
<div class="a td c" style="left:1239px;top:1801px;width:127px;color:#fff;font-weight:bold;letter-spacing:-0.2px"><span class="">13.08%</span></div>
<div class="a td c" style="left:1366px;top:1801px;width:123px;color:#fff;font-weight:bold;letter-spacing:-0.2px"><span class="">$110,788.34</span></div>
<div class="a td c" style="left:1489px;top:1801px;width:118.59999999999991px;color:#fff;font-weight:bold;letter-spacing:-0.2px"><span class="">$85,489.99</span></div>
<div class="a td c" style="left:1607.6px;top:1801px;width:132.4000000000001px;color:#fff;font-weight:bold;letter-spacing:-0.2px"><span class="">$196,278.33</span></div>
<div class="a td c" style="left:1740px;top:1801px;width:129px;color:#fff;font-weight:bold;letter-spacing:-0.2px"><span class="">$407.22</span></div>
<div class="a td c" style="left:1869px;top:1801px;width:171px;color:#fff;font-weight:bold;letter-spacing:-0.2px"><span class="">$3,481.91</span></div>
<div class="a td c" style="left:2040px;top:1801px;width:139px;color:#fff;font-weight:bold;letter-spacing:-0.2px"><span class="">$7.22</span></div>
<div class="a td c" style="left:2179px;top:1801px;width:64.5px;color:#fff;font-weight:bold;letter-spacing:-0.2px"><span class="">$55.37</span></div>
<div class="a" style="left:29.5px;top:1500px;width:2279.5px;height:297px;border:1.5px solid #e4e4e4;border-top:none;border-radius:0 0 12px 12px;z-index:20;pointer-events:none"></div>
<div class="a" style="left:2307.5px;top:150px;width:1.2px;height:1360px;background:#e6e6e6;z-index:20"></div>

</body></html>
